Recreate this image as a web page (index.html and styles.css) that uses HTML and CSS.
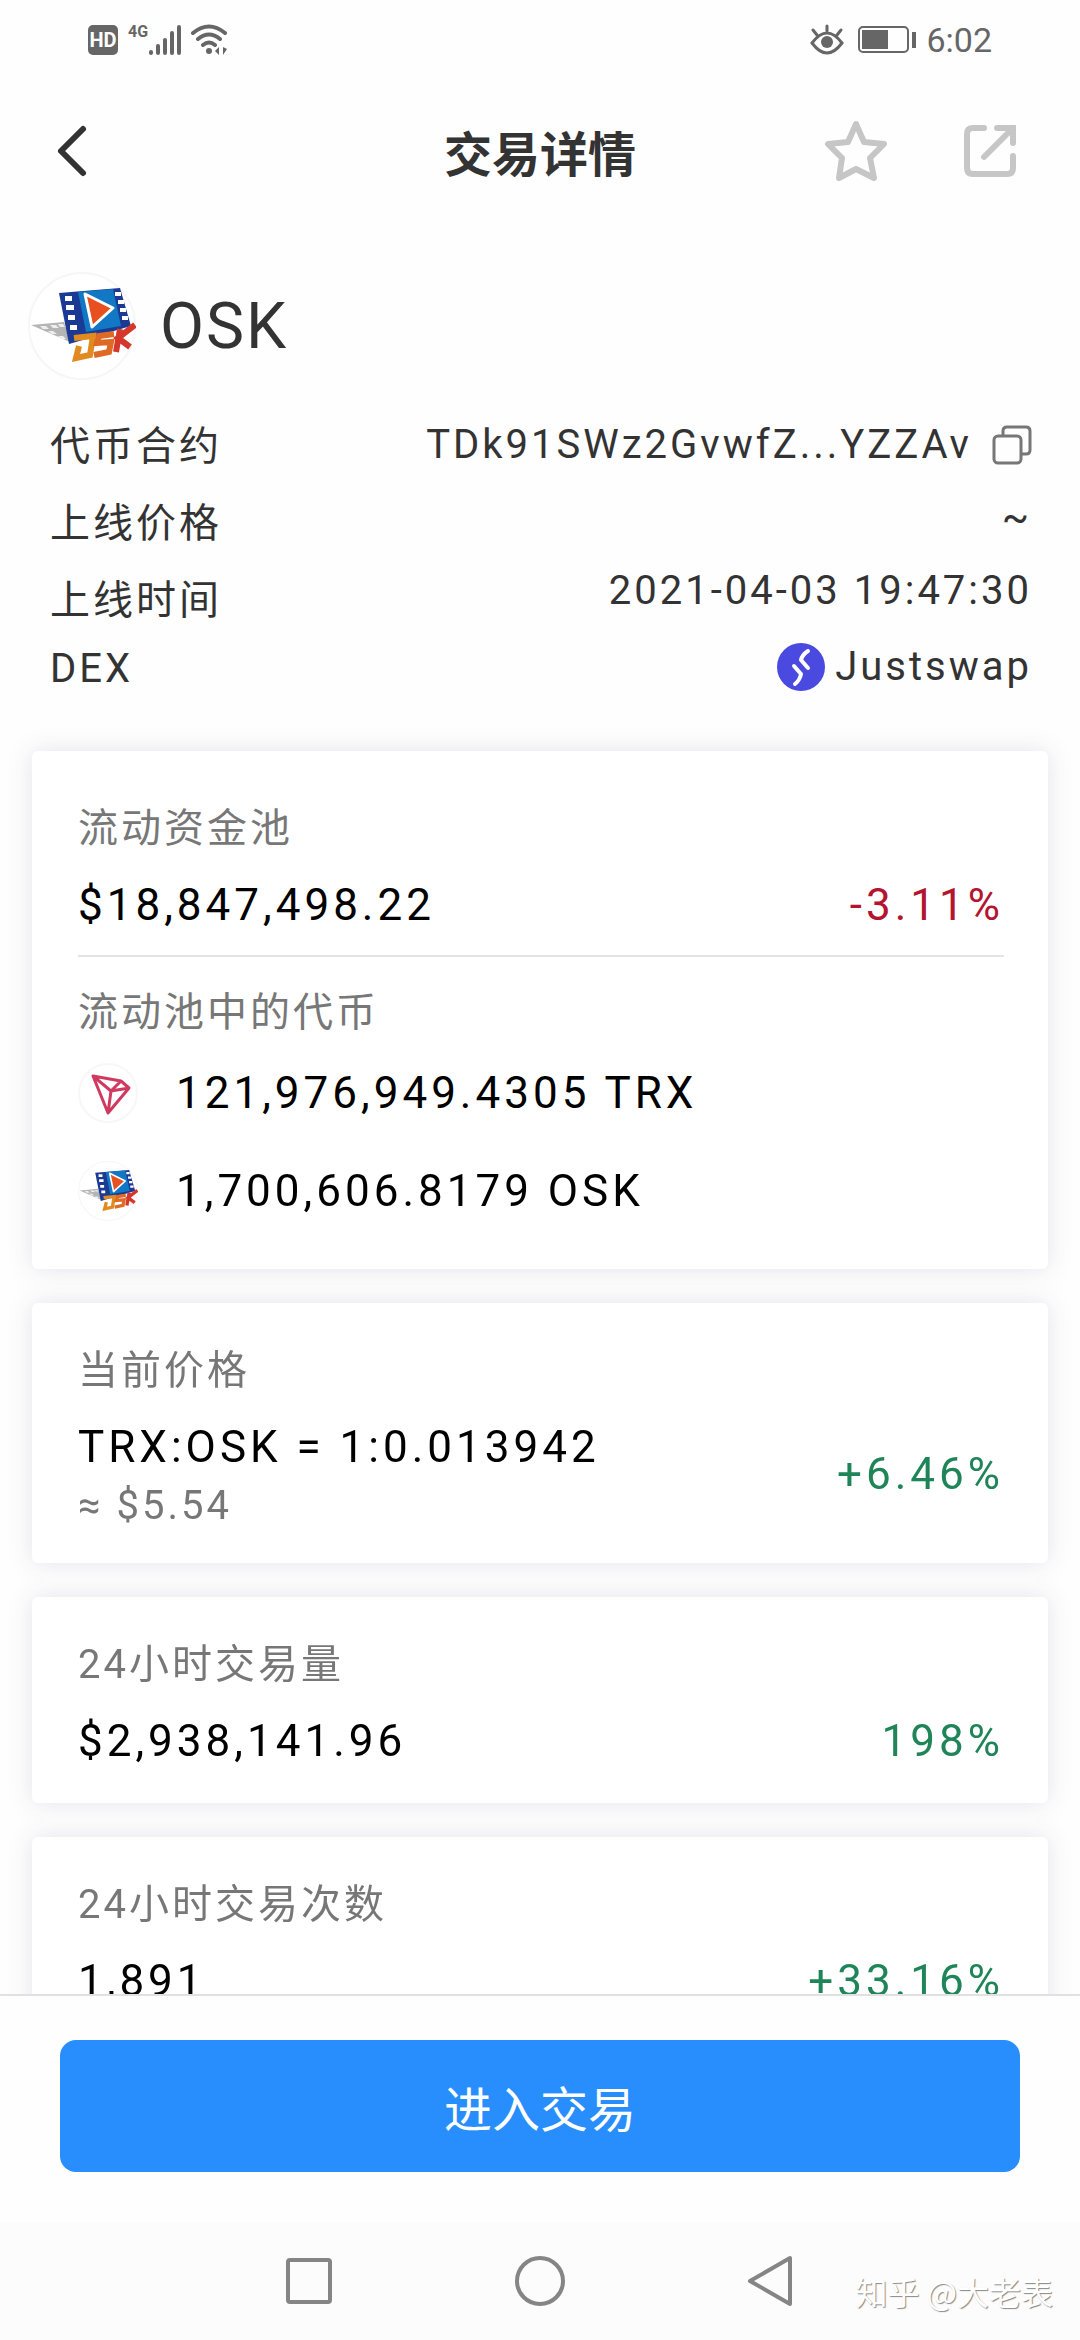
FILE: index.html
```html
<!DOCTYPE html>
<html lang="zh-CN">
<head>
  <meta charset="UTF-8">
  <meta name="viewport" content="width=device-width, initial-scale=1">
  <title>交易详情</title>
  <link rel="stylesheet" href="styles.css">
</head>
<body>
  <!-- shared OSK token logo -->
  <svg class="defs" aria-hidden="true">
    <symbol id="osk-logo" viewBox="0 0 108 108">
      <circle cx="54" cy="54" r="53" fill="#fff" stroke="#f6f6f6" stroke-width="2"/>
      <path d="M3 53L36 50L42 70Z" fill="#b5b5b5"/>
      <path d="M12 54h6l3 3h-6zM22 53h6l3 3h-6zM20 59h5l4 3h-5zM30 64h5l3 3h-5zM30 52h5l2 3h-5z" fill="#eee"/>
      <path d="M31 21L92 16L103 54L41 72Z" fill="#1b3a94"/>
      <path d="M50 20L85 17L93 54L58 60Z" fill="#1277c4"/>
      <path d="M37 24h7v5h-7zM38 33h8v5h-8zM40 43h7v5h-7zM42 53h7v5h-7zM87 20h6v4h-6zM90 28h6v4h-6zM92 36h6v4h-6zM94 44h6v4h-6z" fill="#fff"/>
      <path d="M57 22L85 36L64 55Z" fill="#e9501f" stroke="#fff" stroke-width="3" stroke-linejoin="round"/>
      <g fill="none" stroke-width="6">
        <path d="M46 66L65 64L62 83L48 86L51 74" stroke="#e08a20"/>
        <path d="M86 62L71 64L69 71L83 70L81 80L66 83" stroke="#df6a25"/>
        <path d="M92 57L88 80M107 53L90 66L102 75" stroke="#d5382b"/>
      </g>
    </symbol>
  </svg>

  <div class="app">
    <div class="status-bar">
      <div class="status-left">
        <span class="hd">HD</span>
        <span class="network">4G</span>
        <svg class="signal" width="34" height="32" viewBox="0 0 34 32" fill="none" stroke="#666" stroke-width="4" stroke-linecap="round">
          <path d="M3 28v1M10 22v7M17 16v13M24 9v20M31 3v26"/>
        </svg>
        <svg class="wifi" width="38" height="32" viewBox="0 0 38 32" fill="none" stroke="#666" stroke-width="4" stroke-linecap="round">
          <path d="M3 9Q19 -4 35 9M8 15Q19 6 30 15M13 21Q19 16 25 21"/>
          <circle cx="19" cy="27" r="3" fill="#666" stroke="none"/>
          <path d="M25 27l4-4v8zM37 25l-4-2v8z" fill="#666" stroke="none"/>
        </svg>
      </div>
      <div class="status-right">
        <svg class="eye" width="34" height="32" viewBox="0 0 34 32" fill="none" stroke="#666" stroke-width="3" stroke-linecap="round">
          <path d="M2 19Q17 -1 32 19Q17 39 2 19ZM17 8V2M7 11L3 6M27 11L31 6"/>
          <circle cx="17" cy="18" r="6" fill="#666" stroke="none"/>
        </svg>
        <svg width="58" height="28" viewBox="0 0 58 28">
          <rect x="1" y="1" width="49" height="25" rx="4" fill="none" stroke="#666" stroke-width="2"/>
          <path d="M4 4h26v19H4zM54 6h4v16h-4z" fill="#666"/>
        </svg>
        <span class="clock">6:02</span>
      </div>
    </div>

    <header class="title-bar">
      <button class="icon-btn" aria-label="返回">
        <svg width="32" height="56" viewBox="0 0 32 56" fill="none" stroke="#333" stroke-width="6" stroke-linecap="round" stroke-linejoin="round">
          <path d="M27 6L5 28L27 50"/>
        </svg>
      </button>
      <h1>交易详情</h1>
      <div class="actions">
        <button class="icon-btn" aria-label="收藏">
          <svg width="64" height="64" viewBox="0 0 64 64" fill="none" stroke="#c6c6c6" stroke-width="6" stroke-linejoin="round">
            <path d="M32 5L40 23L60 25L46 39L50 59L32 50L15 59L18 39L4 25L24 23Z"/>
          </svg>
        </button>
        <button class="icon-btn" aria-label="分享">
          <svg width="56" height="56" viewBox="0 0 56 56" fill="none" stroke="#c6c6c6" stroke-width="6" stroke-linecap="round">
            <path d="M22 5H11Q5 5 5 11V45Q5 51 11 51H45Q51 51 51 45V33M35 5H51V20M51 5L22 34"/>
          </svg>
        </button>
      </div>
    </header>

    <main>
      <section class="token">
        <svg class="token-logo"><use href="#osk-logo"/></svg>
        <h2>OSK</h2>
      </section>

      <section class="info">
        <div class="info-labels">
          <span>代币合约</span>
          <span>上线价格</span>
          <span>上线时间</span>
          <span class="latin">DEX</span>
        </div>
        <div class="info-values">
          <div class="contract">
            <span>TDk91SWz2GvwfZ...YZZAv</span>
            <button class="icon-btn" aria-label="复制">
              <svg width="40" height="40" viewBox="0 0 40 40" fill="none" stroke="#777" stroke-width="3">
                <rect x="2" y="11" width="27" height="27" rx="4"/>
                <path d="M11 11V6Q11 2 15 2H34Q38 2 38 6V25Q38 29 34 29H29"/>
              </svg>
            </button>
          </div>
          <div>~</div>
          <div>2021-04-03 19:47:30</div>
          <div class="dex">
            <svg width="48" height="48" viewBox="0 0 48 48">
              <circle cx="24" cy="24" r="24" fill="#4a4ae0"/>
              <path d="M31 8Q25 12 24 17L31 25M17 23L24 31Q23 37 18 41" fill="none" stroke="#fff" stroke-width="4" stroke-linecap="round" stroke-linejoin="round"/>
            </svg>
            <span>Justswap</span>
          </div>
        </div>
      </section>

      <div class="cards">
        <section class="card pool">
          <h3>流动资金池</h3>
          <div class="row">
            <span class="value">$18,847,498.22</span>
            <span class="value down">-3.11%</span>
          </div>
          <hr>
          <h3>流动池中的代币</h3>
          <ul>
            <li>
              <svg class="coin" viewBox="0 0 60 60" fill="none" stroke="#cf3a60" stroke-width="3" stroke-linejoin="round">
                <circle cx="30" cy="30" r="29" stroke="#f7f7f7" stroke-width="2"/>
                <path d="M15 13L43 18L51 25L30 50ZM15 13L33 28L30 50M33 28L51 25M33 28L43 18"/>
              </svg>
              <span class="value">121,976,949.4305 TRX</span>
            </li>
            <li>
              <svg class="coin"><use href="#osk-logo"/></svg>
              <span class="value">1,700,606.8179 OSK</span>
            </li>
          </ul>
        </section>

        <section class="card">
          <h3>当前价格</h3>
          <div class="row">
            <div>
              <div class="value">TRX:OSK = 1:0.013942</div>
              <div class="approx">≈ $5.54</div>
            </div>
            <span class="value up">+6.46%</span>
          </div>
        </section>

        <section class="card">
          <h3>24小时交易量</h3>
          <div class="row">
            <span class="value">$2,938,141.96</span>
            <span class="value up">198%</span>
          </div>
        </section>

        <section class="card">
          <h3>24小时交易次数</h3>
          <div class="row">
            <span class="value">1,891</span>
            <span class="value up">+33.16%</span>
          </div>
        </section>
      </div>
    </main>

    <footer>
      <button class="trade-btn">进入交易</button>
    </footer>

    <nav>
      <button class="icon-btn" aria-label="多任务">
        <svg width="52" height="52" viewBox="0 0 52 52" fill="none" stroke="#858585" stroke-width="4"><rect x="5" y="5" width="42" height="42" rx="2"/></svg>
      </button>
      <button class="icon-btn" aria-label="主页">
        <svg width="52" height="52" viewBox="0 0 52 52" fill="none" stroke="#858585" stroke-width="4"><circle cx="26" cy="26" r="23"/></svg>
      </button>
      <button class="icon-btn" aria-label="后退">
        <svg width="52" height="52" viewBox="0 0 52 52" fill="none" stroke="#858585" stroke-width="4" stroke-linejoin="round"><path d="M45 3V49L5 26Z"/></svg>
      </button>
      <span class="watermark">知乎 @大老表</span>
    </nav>
  </div>
</body>
</html>
```
FILE: styles.css
```css
* {
  box-sizing: border-box;
}
body {
  margin: 0;
  font-family: Roboto, "Noto Sans CJK SC", sans-serif;
  color: #333;
  background-color: #fefefe;
}
h1, h2, h3, ul {
  margin: 0;
  padding: 0;
  font-weight: 400;
  list-style: none;
}
svg {
  display: block;
}
.defs {
  position: absolute;
  width: 0;
  height: 0;
}
.icon-btn {
  display: block;
  padding: 0;
  border: none;
  background: none;
  cursor: pointer;
}
.app {
  display: flex;
  flex-direction: column;
  height: 100vh;
}

/* status bar */
.status-bar {
  display: flex;
  justify-content: space-between;
  align-items: center;
  height: 80px;
  padding: 0 88px;
  color: #666;
}
.status-left, .status-right {
  display: flex;
  align-items: center;
}
.status-right {
  gap: 10px;
}
.eye {
  margin-right: 4px;
}
.hd {
  width: 30px;
  border-radius: 5px;
  background-color: #666;
  color: #fff;
  font-size: 20px;
  font-weight: 700;
  line-height: 30px;
  text-align: center;
}
.network {
  align-self: flex-start;
  margin-left: 10px;
  font-size: 16px;
  font-weight: 700;
  line-height: 16px;
}
.wifi {
  margin-left: 8px;
}
.clock {
  font-size: 34px;
}

/* title bar */
.title-bar {
  display: grid;
  grid-template-columns: 1fr auto 1fr;
  align-items: center;
  height: 142px;
  padding: 0 56px;
}
.title-bar h1 {
  font-size: 48px;
  font-weight: 700;
}
.actions {
  display: flex;
  justify-content: flex-end;
  align-items: center;
  gap: 74px;
  padding-right: 6px;
}

main {
  flex: 1;
  min-height: 0;
  overflow: hidden;
}
.token {
  display: flex;
  align-items: center;
  gap: 24px;
  padding: 50px 28px 0;
}
.token-logo {
  width: 108px;
  height: 108px;
}
.token h2 {
  font-size: 64px;
  letter-spacing: 2px;
}

/* contract, launch time, dex */
.info {
  display: flex;
  justify-content: space-between;
  padding: 28px 48px 0 50px;
  font-size: 40px;
  letter-spacing: 3px;
}
.info-labels {
  display: flex;
  flex-direction: column;
  line-height: 77px;
}
.info-labels .latin {
  line-height: 60px;
}
.info-values {
  line-height: 73px;
  text-align: right;
}
.contract, .dex {
  display: flex;
  justify-content: flex-end;
  align-items: center;
}
.contract {
  gap: 20px;
}
.dex {
  gap: 10px;
  line-height: 80px;
}

/* cards */
.cards {
  display: flex;
  flex-direction: column;
  gap: 34px;
  padding: 44px 32px;
  filter: drop-shadow(0 0 12px rgba(30, 30, 80, 0.12));
}
.card {
  padding: 40px 44px 30px 46px;
  border-radius: 6px;
  background-color: #fff;
}
.pool {
  padding-top: 50px;
  padding-bottom: 46px;
}
.card h3 {
  color: #777;
  font-size: 40px;
  line-height: 56px;
  letter-spacing: 3px;
}
.row {
  display: flex;
  justify-content: space-between;
  align-items: center;
  margin-top: 16px;
}
.value {
  color: #000;
  font-size: 44px;
  line-height: 64px;
  letter-spacing: 4px;
}
.up {
  color: #1f8558;
}
.down {
  color: #b3142f;
}
.approx {
  color: #777;
  font-size: 40px;
  line-height: 54px;
  letter-spacing: 3px;
}
.card hr {
  height: 2px;
  margin: 18px 0 28px;
  border: none;
  background-color: #e4e4e4;
}
.card li {
  display: flex;
  align-items: center;
  gap: 38px;
  margin-top: 34px;
}
.card h3 + ul li:first-child {
  margin-top: 20px;
}
.coin {
  width: 60px;
  height: 60px;
}

/* bottom */
footer {
  padding: 44px 60px 50px;
  border-top: 2px solid #e2e0e2;
}
.trade-btn {
  display: block;
  width: 100%;
  height: 132px;
  border: none;
  border-radius: 16px;
  background-color: #288efe;
  color: #fff;
  font-family: inherit;
  font-size: 48px;
  cursor: pointer;
}
nav {
  position: relative;
  display: flex;
  justify-content: center;
  align-items: center;
  gap: 179px;
  height: 118px;
  background-color: #fcfcfc;
}
.watermark {
  position: absolute;
  right: 27px;
  bottom: 25px;
  color: #fff;
  font-family: "Noto Sans CJK SC", sans-serif;
  font-size: 32px;
  line-height: 48px;
  text-shadow: 1px 1px 1px #888;
}
```
